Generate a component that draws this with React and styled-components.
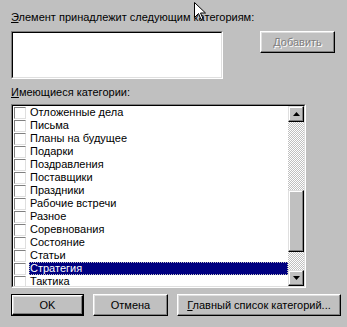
import React from "react";
import styled, { createGlobalStyle } from "styled-components";

const GlobalStyle = createGlobalStyle`
  html, body {
    margin: 0;
    padding: 0;
    background: #c0c0c0;
  }
  body {
    font-family: "Liberation Sans", Arial, sans-serif;
    font-size: 11px;
    color: #000;
  }
`;

const categories = [
  "Отложенные дела",
  "Письма",
  "Планы на будущее",
  "Подарки",
  "Поздравления",
  "Поставщики",
  "Праздники",
  "Рабочие встречи",
  "Разное",
  "Соревнования",
  "Состояние",
  "Статьи",
  "Стратегия",
  "Тактика",
];

const Dialog = styled.div`
  position: relative;
  width: 347px;
  height: 327px;
  box-sizing: border-box;
  padding: 11px 12px 0 11px;
  background: #c0c0c0;
  display: flex;
  flex-direction: column;
  overflow: hidden;
`;

const Label = styled.div`
  height: 13px;
  line-height: 13px;
  margin-bottom: ${(p) => p.gap || 7}px;
  white-space: nowrap;

  u {
    text-decoration: underline;
  }
`;

const TopRow = styled.div`
  display: flex;
  justify-content: space-between;
  align-items: flex-start;
  margin-bottom: 7px;
`;

const Sunken = styled.div`
  box-sizing: border-box;
  border-top: 1px solid #808080;
  border-left: 1px solid #808080;
  border-right: 1px solid #fff;
  border-bottom: 1px solid #fff;
  background: #fff;
  width: ${(p) => p.w}px;
  height: ${(p) => p.h}px;
`;

const SunkenInner = styled.div`
  box-sizing: border-box;
  height: 100%;
  border-top: 1px solid #000;
  border-left: 1px solid #000;
  border-right: 1px solid #dfdfdf;
  border-bottom: 1px solid #dfdfdf;
  display: flex;
  overflow: hidden;
`;

const ButtonFrame = styled.div`
  box-sizing: border-box;
  width: ${(p) => p.w}px;
  height: 22px;
  border: ${(p) => (p.$default ? "1px solid #000" : "none")};
  flex: none;
`;

const ButtonFace = styled.div`
  box-sizing: border-box;
  height: 100%;
  background: #c0c0c0;
  border-top: 1px solid #fff;
  border-left: 1px solid #fff;
  border-right: 1px solid #000;
  border-bottom: 1px solid #000;
  box-shadow: inset -1px -1px 0 #808080, inset 1px 1px 0 #dfdfdf;
  display: flex;
  align-items: center;
  justify-content: center;
  white-space: nowrap;
  color: ${(p) => (p.$disabled ? "#808080" : "#000")};
  text-shadow: ${(p) => (p.$disabled ? "1px 1px 0 #fff" : "none")};
  padding-bottom: 1px;
`;

const Items = styled.div`
  flex: 1;
  display: flex;
  flex-direction: column;
  padding-top: 0;
`;

const Item = styled.div`
  display: flex;
  align-items: center;
  height: 13px;
  flex: none;
  padding-left: 1px;
`;

const Check = styled.div`
  box-sizing: border-box;
  width: 12px;
  height: 12px;
  border-top: 1px solid #808080;
  border-left: 1px solid #808080;
  border-right: 1px solid #dfdfdf;
  border-bottom: 1px solid #dfdfdf;
  background: #fff;
  margin-right: 3px;
  flex: none;
`;

const ItemText = styled.div`
  flex: 1;
  height: 13px;
  line-height: 13px;
  padding-left: 1px;
  box-sizing: border-box;
  white-space: nowrap;
  background: ${(p) => (p.$selected ? "#000080" : "transparent")};
  color: ${(p) => (p.$selected ? "#fff" : "#000")};
  outline: ${(p) => (p.$selected ? "1px dotted #c0c0c0" : "none")};
  outline-offset: -1px;
`;

const ScrollBar = styled.div`
  width: 16px;
  flex: none;
  display: flex;
  flex-direction: column;
  background-color: #fff;
  background-image: repeating-conic-gradient(#c0c0c0 0 25%, #fff 0 50%);
  background-size: 2px 2px;
`;

const ScrollButton = styled.div`
  box-sizing: border-box;
  width: 16px;
  height: ${(p) => p.h || 16}px;
  flex: none;
  background: #c0c0c0;
  border-top: 1px solid #dfdfdf;
  border-left: 1px solid #dfdfdf;
  border-right: 1px solid #000;
  border-bottom: 1px solid #000;
  box-shadow: inset -1px -1px 0 #808080, inset 1px 1px 0 #fff;
  display: flex;
  align-items: center;
  justify-content: center;
`;

const Spacer = styled.div`
  height: ${(p) => p.h}px;
  flex: none;
`;

const BottomRow = styled.div`
  display: flex;
  gap: 9px;
  margin-top: 6px;
`;

const Cursor = styled.svg`
  position: absolute;
  left: 194px;
  top: 2px;
`;

const Arrow = ({ up }) => (
  <svg width="7" height="4" viewBox="0 0 7 4">
    <path d={up ? "M3.5 0 L7 4 L0 4 Z" : "M0 0 L7 0 L3.5 4 Z"} fill="#000" />
  </svg>
);

const Button = ({ w, children, isDefault, disabled }) => (
  <ButtonFrame w={w} $default={isDefault}>
    <ButtonFace $disabled={disabled}>{children}</ButtonFace>
  </ButtonFrame>
);

export default function App() {
  return (
    <>
      <GlobalStyle />
      <Dialog>
        <Label>
          <u>Э</u>лемент принадлежит следующим категориям:
        </Label>
        <TopRow>
          <Sunken w={212} h={48}>
            <SunkenInner />
          </Sunken>
          <Button w={75} disabled>
            <span>
              <u>Д</u>обавить
            </span>
          </Button>
        </TopRow>
        <Label gap={5}>
          <u>И</u>меющиеся категории:
        </Label>
        <Sunken w={295} h={184}>
          <SunkenInner>
            <Items>
              {categories.map((c) => (
                <Item key={c}>
                  <Check />
                  <ItemText $selected={c === "Стратегия"}>{c}</ItemText>
                </Item>
              ))}
            </Items>
            <ScrollBar>
              <ScrollButton>
                <Arrow up />
              </ScrollButton>
              <Spacer h={68} />
              <ScrollButton h={62} />
              <Spacer h={18} />
              <ScrollButton>
                <Arrow />
              </ScrollButton>
            </ScrollBar>
          </SunkenInner>
        </Sunken>
        <BottomRow>
          <Button w={73} isDefault>
            OK
          </Button>
          <Button w={75}>Отмена</Button>
          <Button w={164}>
            <span>
              <u>Г</u>лавный список категорий...
            </span>
          </Button>
        </BottomRow>
        <Cursor width="12" height="19" viewBox="0 0 12 19">
          <path
            d="M0.5 0.5 L0.5 15.5 L4.5 11.5 L7 17.5 L9 16.5 L6.5 11 L11.5 11 Z"
            fill="#fff"
            stroke="#000"
            strokeWidth="1"
          />
        </Cursor>
      </Dialog>
    </>
  );
}
